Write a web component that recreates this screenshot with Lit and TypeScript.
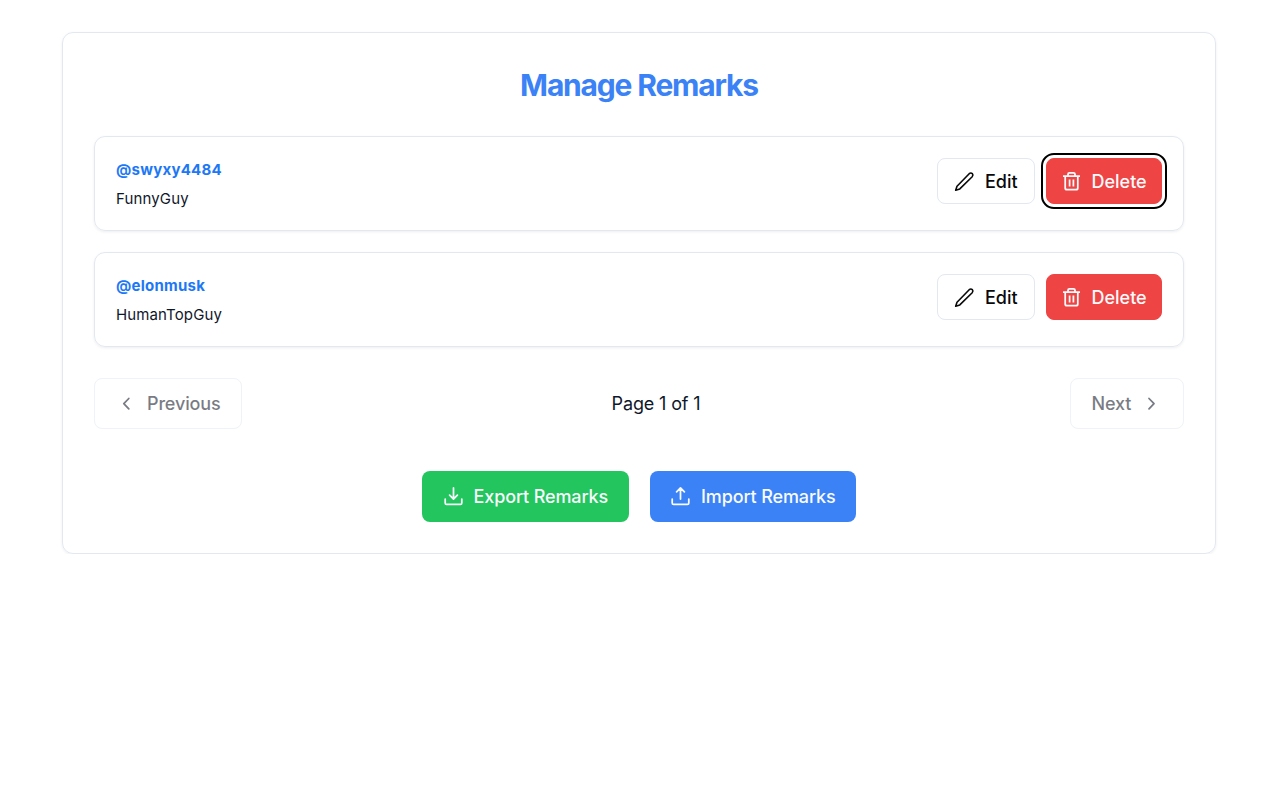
import { LitElement, html, css, svg } from "lit";
import { customElement } from "lit/decorators.js";

const icon = (paths: unknown) =>
  html`<svg class="icon" viewBox="0 0 21 21" fill="none" stroke="currentColor" stroke-width="1.75" stroke-linecap="round" stroke-linejoin="round">${paths}</svg>`;

const pencil = icon(svg`<path stroke-width="1.6" d="M1.7 19.2L3 15.2L15.2 2.7Q16.8 1.3 18.3 2.6Q19.6 4.1 18.2 5.7L5.8 17.9Z"/>`);
const trash = icon(svg`<path stroke-linecap="butt" d="M2 5H19M7 5V3.3Q7 1.9 8.4 1.9H12.6Q14 1.9 14 3.3V5M4.2 5V17Q4.2 18.7 5.9 18.7H15.1Q16.8 18.7 16.8 17V5M8.6 8.6V15.4M12.4 8.6V15.4"/>`);
const download = icon(svg`<path d="M10.5 1.9V12.7M6.6 9.2L10.5 13L14.4 9.2M2.2 13V16.9Q2.2 18.3 3.6 18.3H17.4Q18.8 18.3 18.8 16.9V13"/>`);
const upload = icon(svg`<path d="M10.5 13V2.2M6.6 5.8L10.5 2L14.4 5.8M2.2 13V16.9Q2.2 18.3 3.6 18.3H17.4Q18.8 18.3 18.8 16.9V13"/>`);
const left = icon(svg`<path d="M12.8 5.5L7.8 10.7L12.8 15.9"/>`);
const right = icon(svg`<path d="M8 5.5L13 10.7L8 15.9"/>`);

@customElement("app-root")
export class AppRoot extends LitElement {
  static styles = css`
    :host { display: block; padding: 32px 64px 0 62px; font-family: Inter, sans-serif; color: #0f172a; }
    * { box-sizing: border-box; }
    .panel { height: 522px; border: 1px solid #e2e8f0; border-radius: 11px; padding: 31px; box-shadow: 0 1px 3px #00000012; }
    h1 { margin: 0; height: 42px; line-height: 42px; text-align: center; font-size: 30px; font-weight: 700; letter-spacing: -1.18px; color: #3b82f6; }
    .list { margin-top: 30px; display: flex; flex-direction: column; gap: 21px; }
    .row { height: 95px; border: 1px solid #e2e8f0; border-radius: 11px; padding: 21px; display: flex; justify-content: space-between; align-items: flex-start; box-shadow: 0 1px 3px #00000012; }
    .name { line-height: 24px; font-size: 15px; font-weight: 700; color: #1d78f5; letter-spacing: .25px; }
    .remark { margin-top: 4px; line-height: 25px; font-size: 15px; letter-spacing: .13px; }
    .actions { display: flex; gap: 10.5px; }
    button { margin: 0; display: flex; align-items: center; height: 51px; border: 1px solid #e2e8f0; border-radius: 8px; background: #fff; color: #09090b; font: 500 18px Inter, sans-serif; white-space: nowrap; padding: 0 20px; }
    .actions button { height: 46px; padding: 0 16px; }
    .actions .edit { width: 98px; }
    .actions .delete { width: 116.5px; padding: 0 14px; border-color: #ef4444; background: #ef4444; color: #f8fafc; }
    .focused { outline: 2px solid #000; outline-offset: 3px; }
    .icon { width: 21px; height: 21px; flex: none; margin-right: 10px; }
    .pager { margin-top: 31px; display: flex; justify-content: space-between; align-items: center; font-size: 18px; letter-spacing: -.15px; }
    .pager button { opacity: .55; color: #0b1020; letter-spacing: -.15px; }
    .pager .prev { width: 148px; padding: 0 0 0 21px; }
    .pager .next { width: 114px; padding: 0 0 0 20.5px; }
    .next .icon { margin: 0 0 0 10px; }
    .transfer { margin-top: 42px; display: flex; justify-content: center; gap: 21px; }
    .transfer button { width: 206.5px; border: 0; color: #f8fafc; padding: 0 20.5px; letter-spacing: -.12px; }
    .transfer .export { background: #22c55e; }
    .transfer .import { background: #3b82f6; }
  `;

  private entries = [
    { user: "@swyxy4484", remark: "FunnyGuy", focused: true },
    { user: "@elonmusk", remark: "HumanTopGuy", focused: false },
  ];

  render() {
    return html`
      <div class="panel">
        <h1>Manage Remarks</h1>
        <div class="list">
          ${this.entries.map((e) => html`
            <div class="row">
              <div><div class="name">${e.user}</div><div class="remark">${e.remark}</div></div>
              <div class="actions">
                <button class="edit">${pencil}<span>Edit</span></button>
                <button class="delete ${e.focused ? "focused" : ""}">${trash}<span>Delete</span></button>
              </div>
            </div>`)}
        </div>
        <div class="pager">
          <button class="prev">${left}<span>Previous</span></button>
          <span class="page">Page 1 of 1</span>
          <button class="next"><span>Next</span>${right}</button>
        </div>
        <div class="transfer">
          <button class="export">${download}<span>Export Remarks</span></button>
          <button class="import">${upload}<span>Import Remarks</span></button>
        </div>
      </div>`;
  }
}
